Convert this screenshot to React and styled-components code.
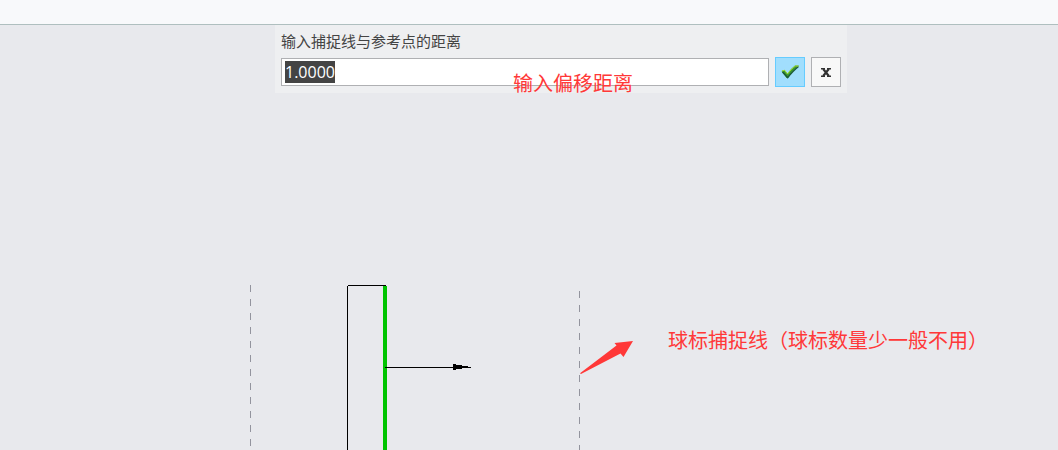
import React, { useEffect, useRef } from "react";
import styled, { createGlobalStyle } from "styled-components";

const GlobalStyle = createGlobalStyle`
  *, *::before, *::after { box-sizing: border-box; }
  body {
    margin: 0;
    background: #e8e9ed;
    color: #444;
    font-family: "Open Sans", "Noto Sans CJK SC", sans-serif;
  }
`;

const Page = styled.div`
  display: flex;
  flex-direction: column;
  min-height: 100vh;
`;

const Ribbon = styled.header`
  height: 25px;
  background: #f8f9fb;
  border-bottom: 1px solid #afbfbf;
`;

const Workspace = styled.main`
  flex: 1;
  display: flex;
  flex-direction: column;
`;

const PromptDock = styled.div`
  display: flex;
  justify-content: center;
  padding-left: 64px;
`;

const Prompt = styled.form`
  display: flex;
  flex-direction: column;
  gap: 4px;
  width: 100%;
  max-width: 572px;
  padding: 4px 6px 6px;
  background: #eeeff1;
`;

const PromptLabel = styled.label`
  font-family: "Noto Sans CJK SC", sans-serif;
  font-size: 15px;
  line-height: 24px;
`;

const PromptRow = styled.div`
  display: flex;
  align-items: center;
  gap: 6px;
`;

const Field = styled.div`
  position: relative;
  flex: 1;
  display: flex;
`;

const DistanceInput = styled.input`
  width: 100%;
  height: 28px;
  padding: 0 3px;
  border: 1px solid #afb0b3;
  border-radius: 0;
  outline: none;
  background: #fff;
  color: #444;
  font-family: "Open Sans", sans-serif;
  font-size: 16px;
  line-height: 20px;

  &::selection {
    background: #444;
    color: #fff;
  }
`;

const Note = styled.p`
  position: absolute;
  left: ${(p) => p.$x}px;
  top: ${(p) => p.$y}px;
  margin: 0;
  color: #ff3838;
  font-family: "Noto Sans CJK SC", sans-serif;
  font-size: 20px;
  line-height: 24px;
  white-space: nowrap;
  pointer-events: none;
`;

const IconButton = styled.button`
  display: flex;
  align-items: center;
  justify-content: center;
  width: 30px;
  height: 30px;
  padding: 0;
  border: 1px solid ${(p) => (p.$primary ? "#66ccff" : "#afb0b3")};
  background: ${(p) => (p.$primary ? "#a1defd" : "#f8f8f8")};
`;

const Canvas = styled.section`
  position: relative;
  flex: 1;
  display: flex;
  min-height: 356px;
  overflow: hidden;
`;

const Drawing = styled.svg`
  position: absolute;
  inset: 0;
  width: 100%;
  height: 100%;
`;

function CheckIcon() {
  return (
    <svg width="18" height="14" viewBox="0 0 18 14" aria-hidden="true">
      <path d="M0.5 6L3.5 5L6.5 8.5C9 5 12 2 14 0.5L18 0.5C13.5 4 10 8 7 13L5.5 13Z" fill="#3c9a30" />
      <path d="M17.5 1.5C13 5 10 8.5 6.7 12.5L1.5 7" fill="none" stroke="#1c5a38" strokeWidth="1.5" />
      <path d="M1 6L3.5 5.2L6.5 9C9 5.5 12 2.5 14.5 1L17.5 1" fill="none" stroke="#a5dc30" strokeWidth="1" />
    </svg>
  );
}

function CloseIcon() {
  return (
    <svg width="10" height="9" viewBox="0 0 10 9" aria-hidden="true">
      <path d="M2.2 1L7.8 8M7.8 1L2.2 8" stroke="#333" strokeWidth="2.2" />
      <path d="M0 .8H4M6 .8H10M0 8.2H4M6 8.2H10" stroke="#333" strokeWidth="1.4" />
    </svg>
  );
}

export default function App() {
  const input = useRef(null);

  useEffect(() => {
    input.current.focus();
    input.current.select();
  }, []);

  return (
    <Page>
      <GlobalStyle />
      <Ribbon />
      <Workspace>
        <PromptDock>
          <Prompt onSubmit={(e) => e.preventDefault()}>
            <PromptLabel htmlFor="distance">输入捕捉线与参考点的距离</PromptLabel>
            <PromptRow>
              <Field>
                <DistanceInput id="distance" ref={input} type="text" defaultValue="1.0000" autoComplete="off" />
                <Note $x={232} $y={13}>输入偏移距离</Note>
              </Field>
              <IconButton type="submit" $primary aria-label="确定">
                <CheckIcon />
              </IconButton>
              <IconButton type="button" aria-label="取消">
                <CloseIcon />
              </IconButton>
            </PromptRow>
          </Prompt>
        </PromptDock>
        <Canvas>
          <Drawing aria-hidden="true">
            <g shapeRendering="crispEdges" fill="none">
              <path d="M250.5 192V2000M579.5 198V2000" stroke="#93949e" strokeDasharray="7 7" />
              <path d="M347.5 2000V193M348 192.5H386" stroke="#000" />
              <path d="M385 193V2000" stroke="#00c400" strokeWidth="4" />
              <path d="M385 274.5H471" stroke="#000" />
              <path d="M453 271H456V272H462V273H468V275H462V276H456V277H453Z" fill="#000" />
            </g>
            <path
              d="M580 280.2L616.5 252.5L614.5 250L633 248L623.5 264L620.5 260.5L581 281Z"
              fill="#ff3838"
            />
          </Drawing>
          <Note $x={668} $y={235}>球标捕捉线（球标数量少一般不用）</Note>
        </Canvas>
      </Workspace>
    </Page>
  );
}
